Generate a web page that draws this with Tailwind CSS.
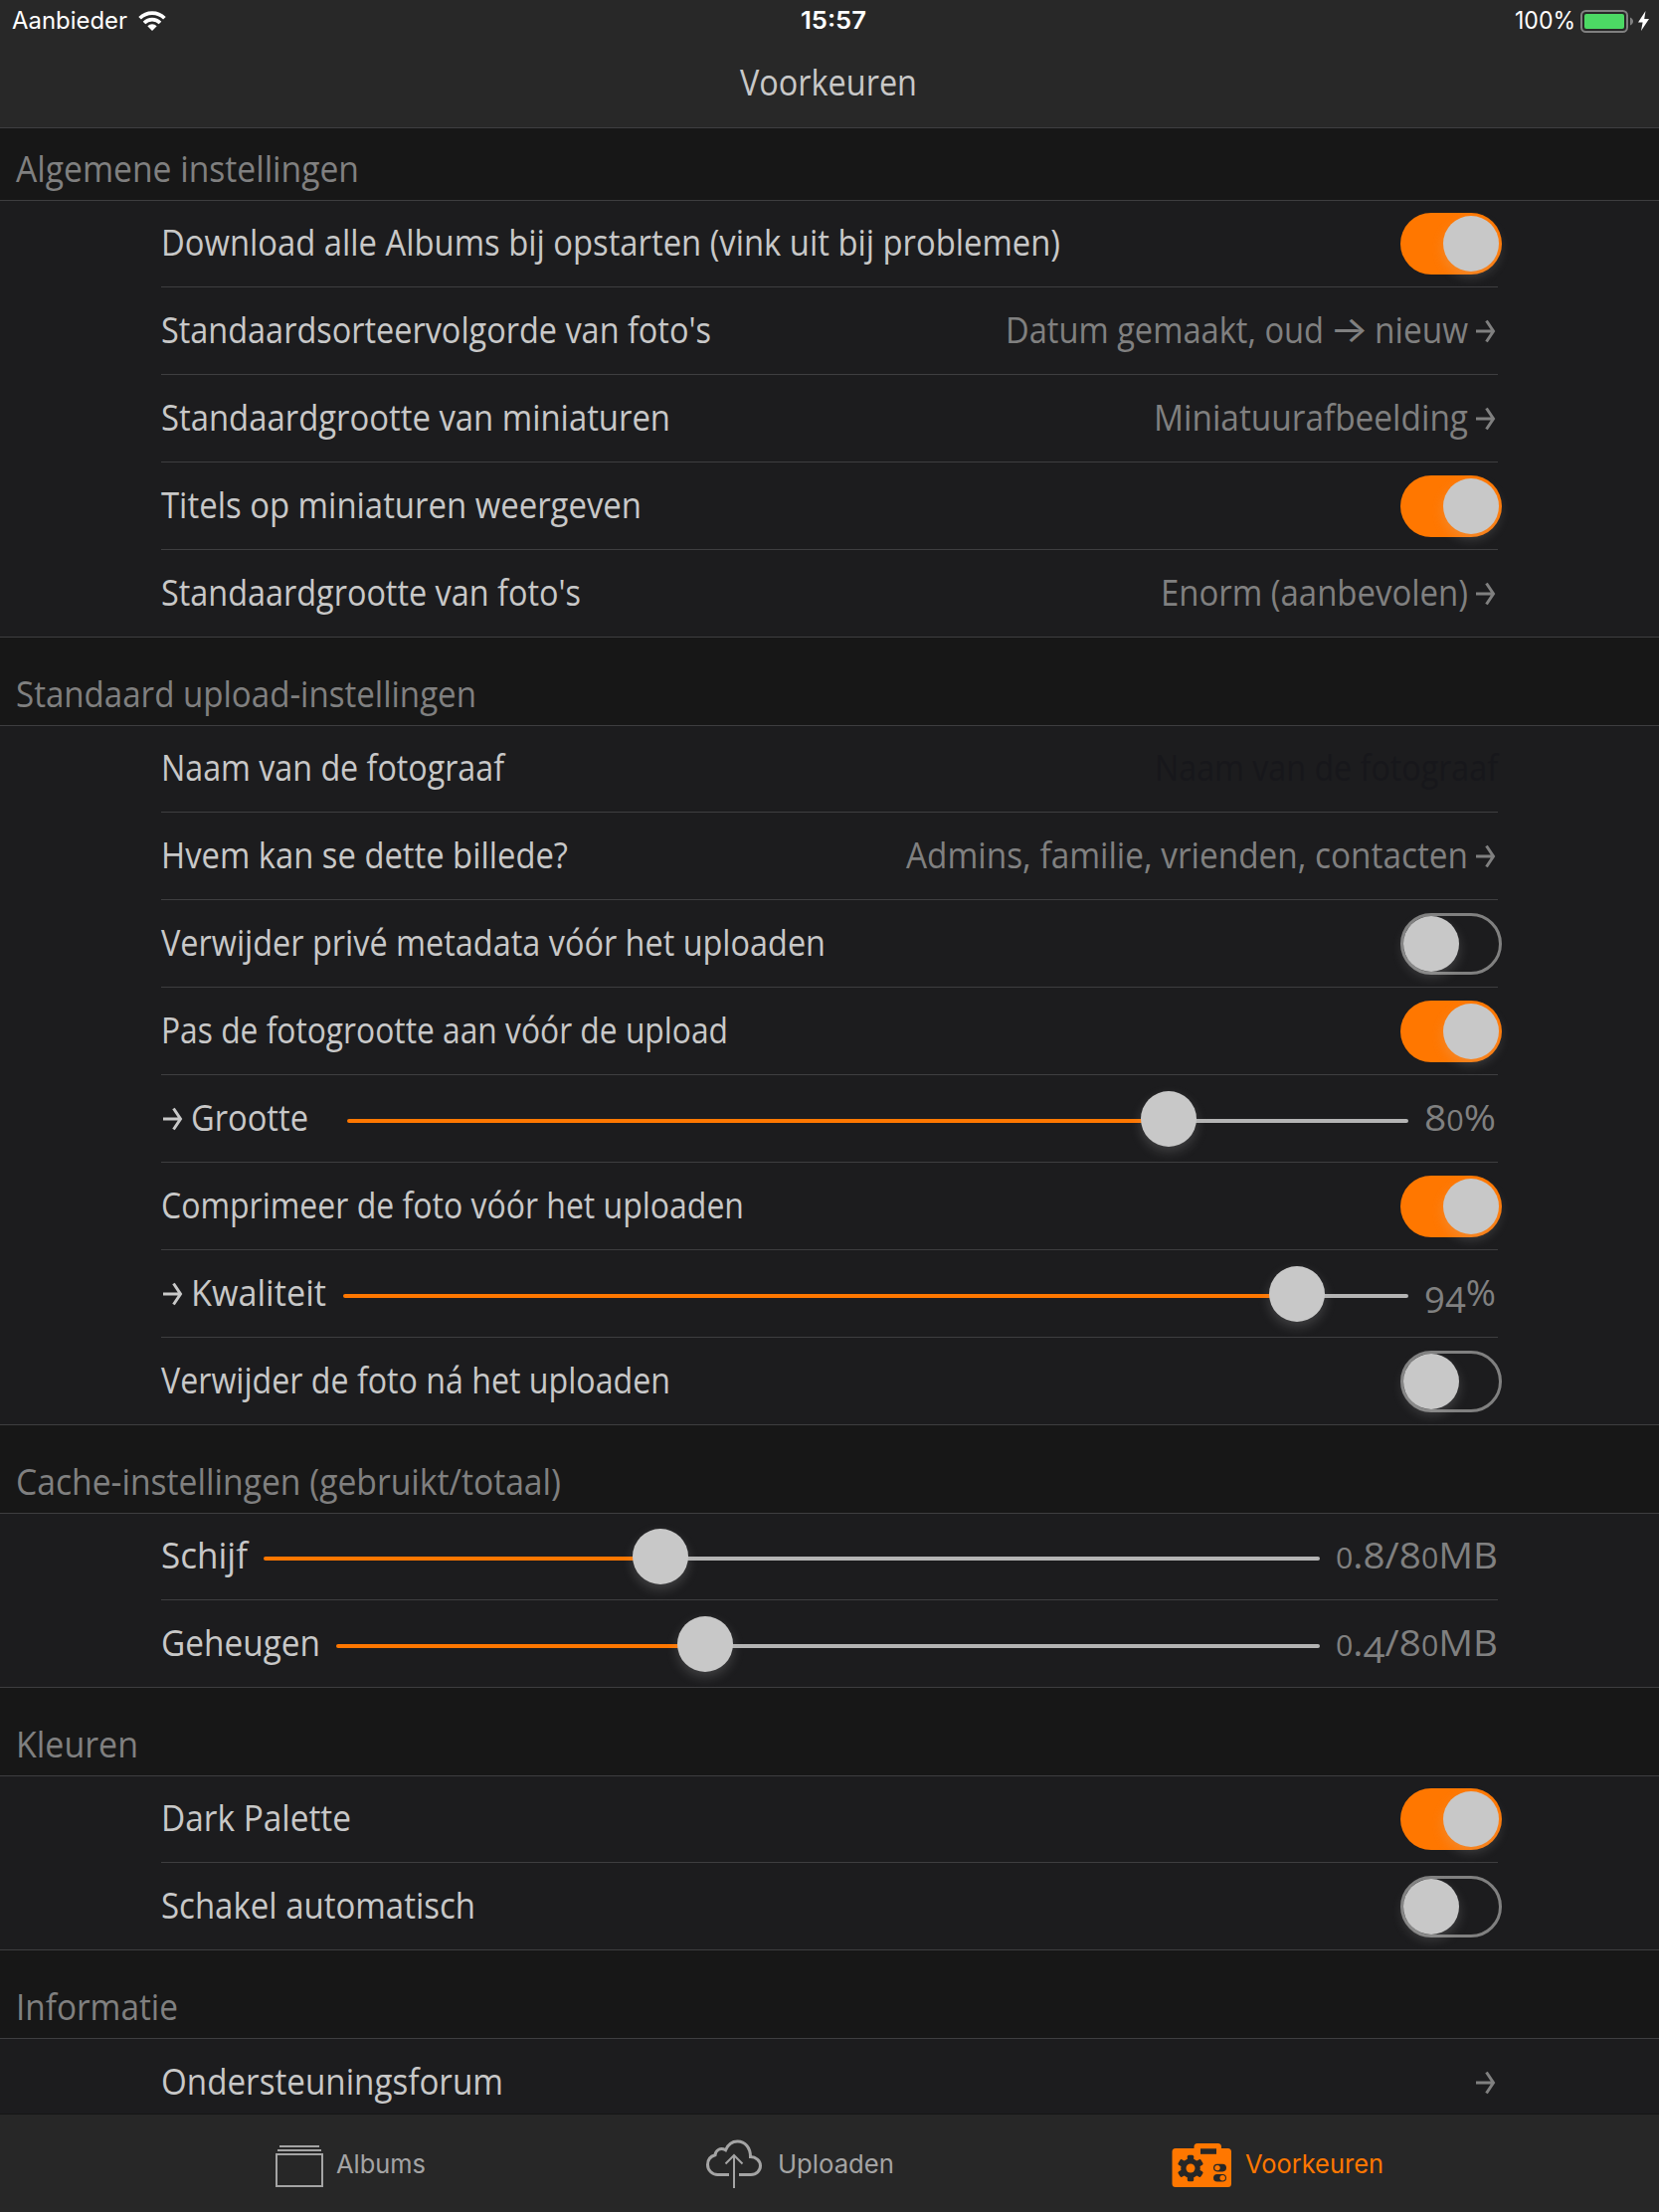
<!DOCTYPE html>
<html lang="nl">
<head>
<meta charset="utf-8">
<title>Voorkeuren</title>
<script src="https://cdn.jsdelivr.net/npm/@tailwindcss/browser@4"></script>
</head>
<body class="w-[1668px] h-[2224px] overflow-hidden bg-[#171717] font-['Open_Sans',sans-serif] text-[37px] leading-10 text-[#c8c8c8] flex flex-col">
<svg class="hidden">
  <symbol id="arrow" viewBox="0 0 20 24"><path d="M0 12H18M10.5 1.500L17.500 12L10.5 22.500" fill="none" stroke="currentColor" stroke-width="3"/></symbol>
</svg>

<header class="h-[129px] shrink-0 bg-[#282828] border-b border-[#3e3e40]">
  <div class="h-[42px] grid grid-cols-3 items-center font-[Inter,sans-serif] text-[24px] text-white">
    <div class="flex items-center gap-[11px] pl-3">
      <span data-w="116" data-y="28">Aanbieder</span>
      <svg class="w-7 h-5" viewBox="0 0 28 20"><path d="M1.6 7.2A17.6 17.6 0 0 1 26.4 7.2M6 12A11.4 11.4 0 0 1 22 12" fill="none" stroke="#fff" stroke-width="3.7"/><path d="M9.3 15.3A6.7 6.7 0 0 1 18.7 15.3L14 20Z" fill="#fff"/></svg>
    </div>
    <div class="flex justify-center pl-2"><span class="font-semibold" data-w="66" data-y="28">15:57</span></div>
    <div class="flex items-center justify-end pr-[10px]">
      <span data-w="61" data-y="28">100%</span>
      <svg class="w-[54px] h-[23px] ml-[5px]" viewBox="0 0 54 23"><rect x="1" y="1" width="46" height="21" rx="4.5" fill="none" stroke="#808080" stroke-width="2"/><rect x="4" y="4" width="40" height="15" rx="2" fill="#4cd964"/><path d="M50 7.5C54 9 54 14 50 15.5Z" fill="#808080"/></svg>
      <svg class="w-[11px] h-5 ml-1" viewBox="0 0 11 20"><path d="M7.5 0L0 11.5H4.6L3 20L11 8H6.2Z" fill="#fff"/></svg>
    </div>
  </div>
  <h1 class="flex justify-center mt-[19px] pr-[2px]"><span data-w="178">Voorkeuren</span></h1>
</header>

<main class="h-[1996px] shrink-0 overflow-hidden">
  <h2 class="h-[73px] flex items-end pb-[13px] pl-4 text-[#808080] border-b border-[#3e3e40]"><span data-w="345">Algemene instellingen</span></h2>
  <section class="bg-[#1c1c1e] border-b border-[#3e3e40] px-[162px]">
    <div class="h-[87px] flex items-end justify-between border-b border-[#3e3e40]">
      <span class="mb-[26px]" data-w="904">Download alle Albums bij opstarten (vink uit bij problemen)</span>
      <i data-toggle="on"></i>
    </div>
    <div class="h-[88px] flex items-end border-b border-[#3e3e40]">
      <span class="mb-[26px]" data-w="553">Standaardsorteervolgorde van foto's</span>
      <span class="ml-auto mb-[26px] flex text-[#808080]"><span data-w="320">Datum gemaakt, oud</span><span class="ml-[6px] mr-[6px] font-[Inter,sans-serif]" data-w="39" data-y="34">→</span><span data-w="94">nieuw</span></span>
      <svg class="w-5 h-6 ml-2 mr-[2px] mb-[31px] text-[#808080]"><use href="#arrow"/></svg>
    </div>
    <div class="h-[88px] flex items-end border-b border-[#3e3e40]">
      <span class="mb-[26px]" data-w="512">Standaardgrootte van miniaturen</span>
      <span class="ml-auto mb-[26px] text-[#808080]" data-w="316">Miniatuurafbeelding</span>
      <svg class="w-5 h-6 ml-2 mr-[2px] mb-[31px] text-[#808080]"><use href="#arrow"/></svg>
    </div>
    <div class="h-[88px] flex items-end justify-between border-b border-[#3e3e40]">
      <span class="mb-[26px]" data-w="483">Titels op miniaturen weergeven</span>
      <i data-toggle="on"></i>
    </div>
    <div class="h-[87px] flex items-end">
      <span class="mb-[26px]" data-w="422">Standaardgrootte van foto's</span>
      <span class="ml-auto mb-[26px] text-[#808080]" data-w="309">Enorm (aanbevolen)</span>
      <svg class="w-5 h-6 ml-2 mr-[2px] mb-[31px] text-[#808080]"><use href="#arrow"/></svg>
    </div>
  </section>

  <h2 class="h-[89px] flex items-end pb-[13px] pl-4 text-[#808080] border-b border-[#3e3e40]"><span data-w="463">Standaard upload-instellingen</span></h2>
  <section class="bg-[#1c1c1e] border-b border-[#3e3e40] px-[162px]">
    <div class="h-[87px] flex items-end justify-between border-b border-[#3e3e40]">
      <span class="mb-[26px]" data-w="345">Naam van de fotograaf</span>
      <span class="mb-[26px] text-[#17171b]" data-w="345">Naam van de fotograaf</span>
    </div>
    <div class="h-[88px] flex items-end border-b border-[#3e3e40]">
      <span class="mb-[26px]" data-w="409">Hvem kan se dette billede?</span>
      <span class="ml-auto mb-[26px] text-[#808080]" data-w="565">Admins, familie, vrienden, contacten</span>
      <svg class="w-5 h-6 ml-2 mr-[2px] mb-[31px] text-[#808080]"><use href="#arrow"/></svg>
    </div>
    <div class="h-[88px] flex items-end justify-between border-b border-[#3e3e40]">
      <span class="mb-[26px]" data-w="668">Verwijder privé metadata vóór het uploaden</span>
      <i data-toggle="off"></i>
    </div>
    <div class="h-[88px] flex items-end justify-between border-b border-[#3e3e40]">
      <span class="mb-[26px]" data-w="570">Pas de fotogrootte aan vóór de upload</span>
      <i data-toggle="on"></i>
    </div>
    <div class="h-[88px] flex items-end border-b border-[#3e3e40]">
      <svg class="w-5 h-6 ml-[2px] mb-[31px]"><use href="#arrow"/></svg>
      <span class="ml-2 mb-[26px]" data-w="118">Grootte</span>
      <i data-slider="1067" data-thumb="826"></i>
      <svg class="w-[72px] h-10 ml-4 mr-[2px] mb-[26px] text-[#808080] fill-current overflow-visible"><text y="35" textLength="72" lengthAdjust="spacingAndGlyphs">8<tspan class="text-[29px]">0</tspan>%</text></svg>
    </div>
    <div class="h-[88px] flex items-end justify-between border-b border-[#3e3e40]">
      <span class="mb-[26px]" data-w="586">Comprimeer de foto vóór het uploaden</span>
      <i data-toggle="on"></i>
    </div>
    <div class="h-[88px] flex items-end border-b border-[#3e3e40]">
      <svg class="w-5 h-6 ml-[2px] mb-[31px]"><use href="#arrow"/></svg>
      <span class="ml-2 mb-[26px]" data-w="136">Kwaliteit</span>
      <i data-slider="1071" data-thumb="959"></i>
      <svg class="w-[72px] h-10 ml-4 mr-[2px] mb-[26px] text-[#808080] fill-current overflow-visible"><text y="35" textLength="72" lengthAdjust="spacingAndGlyphs"><tspan dy="7">94</tspan><tspan dy="-7">%</tspan></text></svg>
    </div>
    <div class="h-[87px] flex items-end justify-between">
      <span class="mb-[26px]" data-w="512">Verwijder de foto ná het uploaden</span>
      <i data-toggle="off"></i>
    </div>
  </section>

  <h2 class="h-[89px] flex items-end pb-[13px] pl-4 text-[#808080] border-b border-[#3e3e40]"><span data-w="548">Cache-instellingen (gebruikt/totaal)</span></h2>
  <section class="bg-[#1c1c1e] border-b border-[#3e3e40] px-[162px]">
    <div class="h-[87px] flex items-end border-b border-[#3e3e40]">
      <span class="mb-[26px]" data-w="87">Schijf</span>
      <i data-slider="1062" data-thumb="399"></i>
      <svg class="w-[163px] h-10 ml-4 mb-[26px] text-[#808080] fill-current overflow-visible"><text y="35" textLength="163" lengthAdjust="spacingAndGlyphs"><tspan class="text-[29px]">0</tspan>.8/8<tspan class="text-[29px]">0</tspan>MB</text></svg>
    </div>
    <div class="h-[87px] flex items-end">
      <span class="mb-[26px]" data-w="160">Geheugen</span>
      <i data-slider="989" data-thumb="371"></i>
      <svg class="w-[163px] h-10 ml-4 mb-[26px] text-[#808080] fill-current overflow-visible"><text y="35" textLength="163" lengthAdjust="spacingAndGlyphs"><tspan class="text-[29px]">0</tspan>.<tspan dy="7">4</tspan><tspan dy="-7">/8</tspan><tspan class="text-[29px]">0</tspan>MB</text></svg>
    </div>
  </section>

  <h2 class="h-[89px] flex items-end pb-[13px] pl-4 text-[#808080] border-b border-[#3e3e40]"><span data-w="123">Kleuren</span></h2>
  <section class="bg-[#1c1c1e] border-b border-[#3e3e40] px-[162px]">
    <div class="h-[87px] flex items-end justify-between border-b border-[#3e3e40]">
      <span class="mb-[26px]" data-w="191">Dark Palette</span>
      <i data-toggle="on"></i>
    </div>
    <div class="h-[87px] flex items-end justify-between">
      <span class="mb-[26px]" data-w="316">Schakel automatisch</span>
      <i data-toggle="off"></i>
    </div>
  </section>

  <h2 class="h-[89px] flex items-end pb-[13px] pl-4 text-[#808080] border-b border-[#3e3e40]"><span data-w="163">Informatie</span></h2>
  <section class="bg-[#1c1c1e] px-[162px]">
    <div class="h-[87px] flex items-end justify-between">
      <span class="mb-[26px]" data-w="344">Ondersteuningsforum</span>
      <svg class="w-5 h-6 mr-[2px] mb-[31px] text-[#808080]"><use href="#arrow"/></svg>
    </div>
  </section>
</main>

<nav class="h-[99px] shrink-0 flex bg-[#272727] border-t border-[#151515] font-[Inter,sans-serif] text-[26px] text-[#a4a4a4]">
  <div class="flex items-start w-[710px] shrink-0 pl-[277px]">
    <svg class="w-12 h-[42px] mt-[31px] shrink-0" viewBox="0 0 48 42"><path d="M4 1H44M2 5H46M1 9H47V41H1Z" fill="none" stroke="currentColor" stroke-width="2"/></svg>
    <span class="ml-[13px] mt-[30px]" data-w="90" data-y="29">Albums</span>
  </div>
  <div class="flex items-start w-[468px] shrink-0">
    <svg class="w-14 h-[50px] mt-[25px] shrink-0" viewBox="0 0 56 50" fill="none" stroke="currentColor"><path stroke-width="3" d="M23 35.5H11.5C6 35.5 1.5 31 1.5 25.5C1.5 20.5 4.5 17 9 15.8C9.5 10.5 14.5 8 19.5 10.8C22 5 26.5 2 31.5 2C39 2 44.5 8 44.5 17.5C50 17.5 54.5 21.5 54.5 26.5C54.5 31.5 50.5 35.5 45 35.5H33"/><path stroke-width="2" d="M28 49V16M19.5 24.5L28 16L36.5 24.5"/></svg>
    <span class="ml-4 mt-[30px]" data-w="117" data-y="29">Uploaden</span>
  </div>
  <div class="flex items-start text-[#ff7700]">
    <svg class="w-[60px] h-11 mt-[29px] shrink-0" viewBox="0 0 60 44"><path fill="currentColor" d="M4 5H22.500V3.500Q22.500 0 26 0H46.500Q50 0 50 3.500V5H56.500Q60 5 60 8.500V40.500Q60 44 56.500 44H4Q.5 44 .5 40.500V8.500Q.5 5 4 5Z"/><g fill="#272727"><rect x="29" y="5.300" width="16" height="5.500"/><circle cx="19" cy="25" r="9.800"/><rect x="15.800" y="11.700" width="6.400" height="26.600" rx="1.500"/><rect x="15.800" y="11.700" width="6.400" height="26.600" rx="1.500" transform="rotate(60 19 25)"/><rect x="15.800" y="11.700" width="6.400" height="26.600" rx="1.500" transform="rotate(120 19 25)"/><rect x="42" y="20.800" width="13" height="7.600" rx="3.800"/><rect x="42" y="31" width="13" height="7.600" rx="3.800"/></g><g fill="currentColor"><circle cx="19" cy="25" r="4.500"/><circle cx="46" cy="24.600" r="2.700"/><circle cx="51.200" cy="34.800" r="2.700"/></g></svg>
    <span class="ml-[14px] mt-[30px]" data-w="139" data-y="29">Voorkeuren</span>
  </div>
</nav>

<template id="on"><span class="block w-[102px] h-[62px] mb-3 -mr-1 shrink-0 rounded-full bg-[#ff7700] py-[3px] pl-[43px]"><span class="block size-14 rounded-full bg-[#c8c8c8] shadow-[0_5px_12px_rgba(200,200,200,0.22)]"></span></span></template>
<template id="off"><span class="block w-[102px] h-[62px] mb-3 -mr-1 shrink-0 rounded-full border-[3px] border-[#808080]"><span class="block size-14 rounded-full bg-[#c8c8c8] shadow-[0_5px_12px_rgba(200,200,200,0.22)]"></span></span></template>
<template id="slider"><span class="flex items-center h-14 mb-[15px] ml-auto shrink-0"><span class="h-1 mt-1 rounded-l-full bg-[#ff7700]"></span><span class="size-14 -mx-7 z-10 rounded-full bg-[#c8c8c8] shadow-[0_5px_12px_rgba(200,200,200,0.22)]"></span><span class="h-1 mt-1 flex-1 rounded-r-full bg-[#b4b4b4]"></span></span></template>
<script>
  // Stamp the switch and slider controls out of their templates.
  document.querySelectorAll('[data-toggle]').forEach(el => {
    el.replaceWith(document.getElementById(el.dataset.toggle).content.cloneNode(true));
  });
  document.querySelectorAll('[data-slider]').forEach(el => {
    const s = document.getElementById('slider').content.firstElementChild.cloneNode(true);
    s.style.width = el.dataset.slider + 'px';
    s.firstElementChild.style.width = el.dataset.thumb + 'px';
    el.replaceWith(s);
  });
  // Set every label at a fixed, condensed line length.
  const NS = 'http://www.w3.org/2000/svg';
  document.querySelectorAll('[data-w]').forEach(el => {
    const w = el.dataset.w;
    const svg = document.createElementNS(NS, 'svg');
    svg.setAttribute('width', w);
    svg.setAttribute('height', 40);
    svg.setAttribute('fill', 'currentColor');
    svg.style.cssText = 'display:block;overflow:visible';
    const t = document.createElementNS(NS, 'text');
    t.setAttribute('y', el.dataset.y || 35);
    t.setAttribute('textLength', w);
    t.setAttribute('lengthAdjust', 'spacingAndGlyphs');
    t.textContent = el.textContent;
    svg.append(t);
    el.replaceChildren(svg);
  });
</script>
</body>
</html>
